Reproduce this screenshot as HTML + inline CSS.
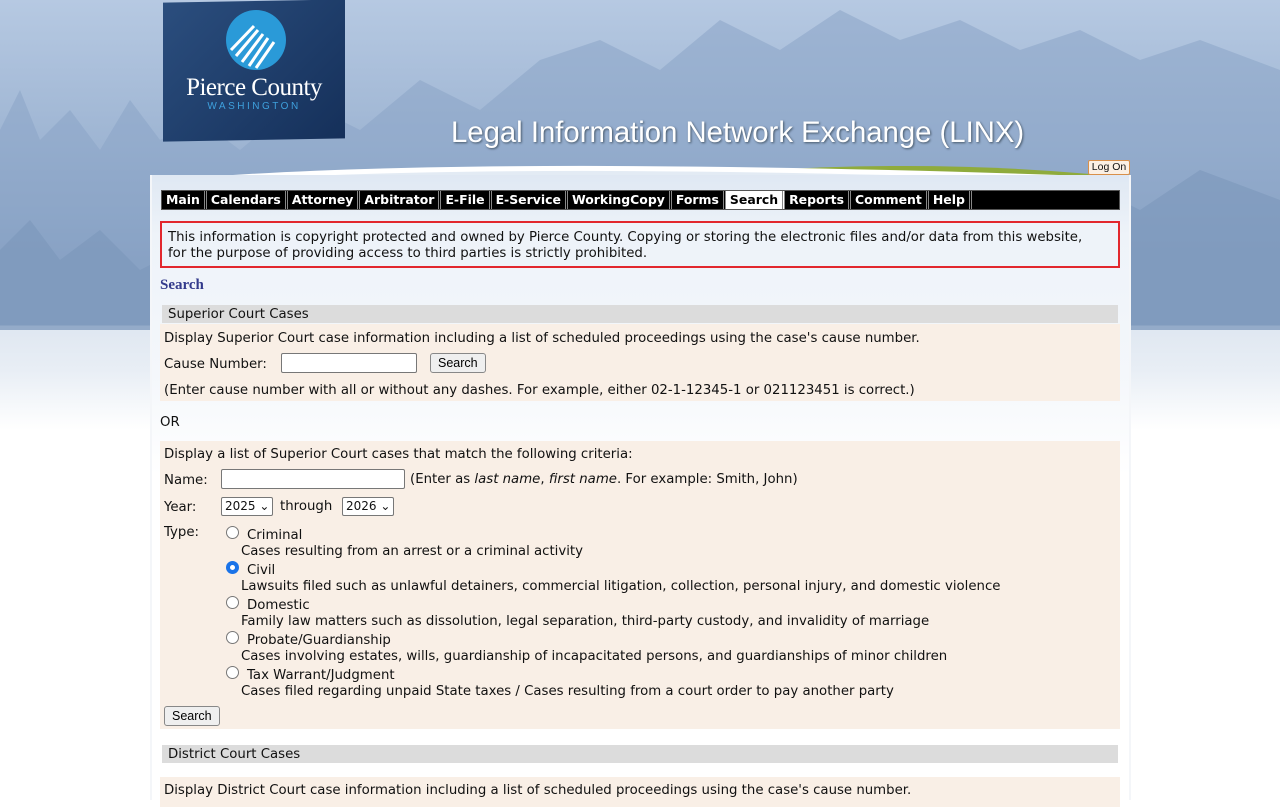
<!DOCTYPE html>
<html style="background:#fff"><head><meta charset="utf-8"><style>
*{margin:0;padding:0;box-sizing:border-box}
body{width:1280px;height:800px;overflow:hidden;position:relative;font-family:"DejaVu Sans",Verdana,sans-serif;font-size:13.3px;color:#111;
background:linear-gradient(to bottom,#b6c9e2 0px,#9db4d2 150px,#86a0c2 260px,#859fc2 325px,#dfe7f1 326px,#e8eef5 370px,#fff 430px,#fff 800px)}
.a{position:absolute}
#panel{left:150px;top:175px;width:981px;height:625px;background:linear-gradient(to bottom,#dfe8f3 0,#eef3f9 60px,#f4f7fb 200px,#fff 300px);border-left:2px solid #f4f6f9;border-right:2px solid #f4f6f9}
#nav{left:161px;top:190px;width:959px;height:20px;background:#000;border:1px solid #555;display:flex;font-weight:bold;font-size:12.45px;color:#fff}
#nav span{padding:0 4px;line-height:18px;border-right:3px double #888;height:18px}
#nav span.s{background:#fff;color:#000;margin-right:0}
.peach{background:#f9efe6;left:160px;width:960px}
.gh{background:#dcdcdc;left:162px;width:956px;height:18px;line-height:20px;padding-left:6px}
input.t{height:20px;border:1px solid #777;border-radius:2px;background:#fff}
.btn{border:1px solid #888;border-radius:3px;background:#efefef;font-family:"Liberation Sans",Arial,sans-serif;font-size:12.5px;height:20px;line-height:18px;padding:0 7px;color:#000}
.sel{border:1px solid #777;border-radius:2px;background:#fff;height:19px;line-height:17px;padding:0 3px;font-size:12px}
.radio{width:13px;height:13px;border:1px solid #777;border-radius:50%;background:#fff}
.tx{margin-top:2px}
</style></head><body>
<svg class="a" style="left:0;top:0" width="1280" height="330">
<g fill="#8aa4c6" opacity=".55">
<path d="M0 330 L0 130 L20 90 L40 140 L70 110 L100 150 L130 100 L160 140 L200 120 L240 150 L300 100 L360 130 L420 80 L480 110 L540 60 L600 40 L660 70 L720 20 L780 50 L840 10 L900 40 L960 20 L1020 50 L1080 30 L1140 60 L1200 40 L1280 70 L1280 330Z"/>
</g>
<g fill="#7893b8" opacity=".5">
<path d="M0 330 L0 250 L30 220 L60 260 L100 230 L140 270 L200 240 L260 280 L320 250 L380 270 L460 230 L520 260 L600 210 L680 250 L760 200 L840 240 L920 190 L1000 220 L1080 180 L1140 210 L1200 170 L1280 200 L1280 330Z"/>
</g>
</svg>
<svg class="a" style="left:150px;top:150px" width="981" height="40"><path d="M560 24 Q760 8 940 24 L940 30 L560 30Z" fill="#8fab3c"/><path d="M0 40 L0 34 Q300 5 981 30 L981 40Z" fill="#e3ebf4"/><path d="M0 34 Q300 5 981 30" stroke="#fff" stroke-width="5" fill="none"/></svg>
<div class="a" id="panel"></div>
<div class="a" style="left:163px;top:1px;width:182px;height:139px;background:linear-gradient(135deg,#2b4e7e,#15305a);transform:skewY(-1deg)"></div>
<svg class="a" style="left:226px;top:10px" width="60" height="60"><circle cx="30" cy="30" r="30" fill="#2a9ad8"/><g stroke="#fff" stroke-width="3"><path d="M5 40 L28 16 M10 46 L32 20 M16 52 L37 24 M23 56 L42 28 M30 58 L48 32"/></g></svg>
<div class="a" style="left:163px;top:74px;width:182px;text-align:center;font-family:'Liberation Serif',serif;font-size:25px;color:#fff;letter-spacing:-0.5px">Pierce County</div>
<div class="a" style="left:163px;top:101px;width:182px;text-align:center;font-family:'Liberation Sans',sans-serif;font-size:10px;color:#3ea0dd;letter-spacing:2.5px">WASHINGTON</div>
<div class="a" style="left:451px;top:116px;font-family:'Liberation Sans',Arial,sans-serif;font-size:29.3px;color:#fff;text-shadow:1px 1px 2px #456">Legal Information Network Exchange (LINX)</div>
<div class="a" style="left:1088px;top:160px;width:42px;height:15px;background:#fbf0e4;border:1px solid #d9904a;border-radius:2px;font-family:'Liberation Sans',sans-serif;font-size:10.5px;line-height:13px;text-align:center">Log On</div>
<div class="a" id="nav"><span>Main</span><span>Calendars</span><span>Attorney</span><span>Arbitrator</span><span>E-File</span><span>E-Service</span><span>WorkingCopy</span><span>Forms</span><span class="s">Search</span><span>Reports</span><span>Comment</span><span>Help</span></div>
<div class="a" style="left:160px;top:221px;width:960px;height:47px;border:2px solid #e2272d;background:#eef3f9;padding:7px 6px;line-height:16px;white-space:nowrap">This information is copyright protected and owned by Pierce County. Copying or storing the electronic files and/or data from this website,<br>for the purpose of providing access to third parties is strictly prohibited.</div>
<div class="a" style="left:160px;top:277px;font-family:'Liberation Serif',serif;font-weight:bold;font-size:15px;color:#333a8c">Search</div>
<div class="a gh" style="top:305px">Superior Court Cases</div>
<div class="a peach" style="top:324px;height:77px"></div>
<div class="a tx" style="left:164px;top:329px">Display Superior Court case information including a list of scheduled proceedings using the case's cause number.</div>
<div class="a tx" style="left:164px;top:355px">Cause Number:</div>
<input class="a t" style="left:281px;top:353px;width:136px">
<div class="a btn" style="left:430px;top:353px">Search</div>
<div class="a tx" style="left:164px;top:381px">(Enter cause number with all or without any dashes. For example, either 02-1-12345-1 or 021123451 is correct.)</div>
<div class="a tx" style="left:160px;top:413px">OR</div>
<div class="a peach" style="top:441px;height:288px"></div>
<div class="a tx" style="left:164px;top:445px">Display a list of Superior Court cases that match the following criteria:</div>
<div class="a tx" style="left:164px;top:471px">Name:</div>
<input class="a t" style="left:221px;top:469px;width:184px">
<div class="a tx" style="left:410px;top:470px">(Enter as <i>last name</i>, <i>first name</i>. For example: Smith, John)</div>
<div class="a tx" style="left:164px;top:498px">Year:</div>
<div class="a sel" style="left:221px;top:497px">2025 &#8964;</div>
<div class="a tx" style="left:280px;top:497px">through</div>
<div class="a sel" style="left:342px;top:497px">2026 &#8964;</div>
<div class="a tx" style="left:164px;top:523px">Type:</div>
<div class="a radio" style="left:226px;top:526px"></div><div class="a tx" style="left:247px;top:526px">Criminal</div>
<div class="a tx" style="left:241px;top:542px">Cases resulting from an arrest or a criminal activity</div>
<div class="a radio" style="left:226px;top:561px;border:4px solid #1a73e8;background:#fff"></div><div class="a tx" style="left:247px;top:561px">Civil</div>
<div class="a tx" style="left:241px;top:577px">Lawsuits filed such as unlawful detainers, commercial litigation, collection, personal injury, and domestic violence</div>
<div class="a radio" style="left:226px;top:596px"></div><div class="a tx" style="left:247px;top:596px">Domestic</div>
<div class="a tx" style="left:241px;top:612px">Family law matters such as dissolution, legal separation, third-party custody, and invalidity of marriage</div>
<div class="a radio" style="left:226px;top:631px"></div><div class="a tx" style="left:247px;top:631px">Probate/Guardianship</div>
<div class="a tx" style="left:241px;top:647px">Cases involving estates, wills, guardianship of incapacitated persons, and guardianships of minor children</div>
<div class="a radio" style="left:226px;top:666px"></div><div class="a tx" style="left:247px;top:666px">Tax Warrant/Judgment</div>
<div class="a tx" style="left:241px;top:682px">Cases filed regarding unpaid State taxes / Cases resulting from a court order to pay another party</div>
<div class="a btn" style="left:164px;top:706px">Search</div>
<div class="a gh" style="top:745px">District Court Cases</div>
<div class="a peach" style="top:777px;height:30px"></div>
<div class="a tx" style="left:164px;top:781px">Display District Court case information including a list of scheduled proceedings using the case's cause number.</div>
</body></html>
